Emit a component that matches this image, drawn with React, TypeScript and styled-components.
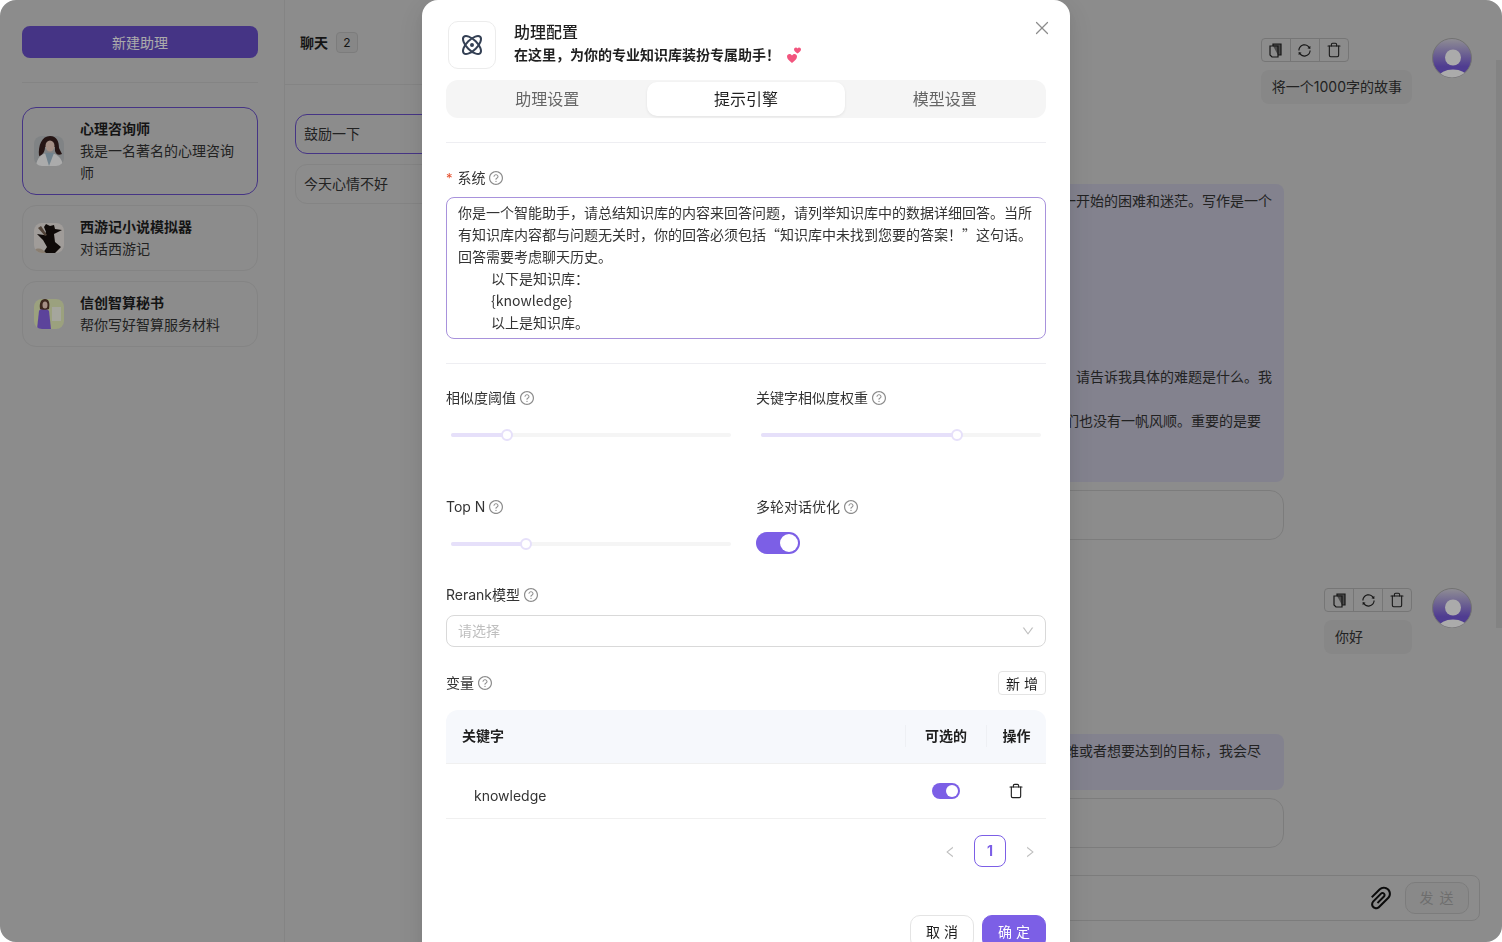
import styled, { createGlobalStyle } from 'styled-components';
import { Atom, Trash, X } from 'lucide-react';
import {
  AiOutlineDown,
  AiOutlineLeft,
  AiOutlinePaperClip,
  AiOutlineQuestionCircle,
  AiOutlineRight,
  AiOutlineSync,
} from 'react-icons/ai';

const primary = '#7c5fe6';
const primaryBehindMask = '#684ec6';
const lineBehindMask = '#c5c5c5';
const fontStack = 'Inter, "Noto Sans CJK SC", sans-serif';

const GlobalStyle = createGlobalStyle`
  html, body {
    margin: 0;
    height: 100%;
    background: #fff;
    overflow: hidden;
  }
  body {
    font-family: ${fontStack};
    font-size: 14px;
    line-height: 22px;
    color: #1f1f1f;
  }
  * {
    box-sizing: border-box;
  }
`;

const Page = styled.div`
  display: flex;
  width: 1502px;
  height: 942px;
  overflow: hidden;
  background: #d1d1d1;
`;

const Sidebar = styled.aside`
  flex: none;
  width: 285px;
  padding: 26px 26px 0 22px;
  border-right: 1px solid ${lineBehindMask};
`;

const NewButton = styled.button`
  display: block;
  width: 100%;
  height: 32px;
  padding: 2px 0 0;
  border: 0;
  border-radius: 8px;
  background: ${primaryBehindMask};
  color: #fff;
  font: inherit;
`;

const SideDivider = styled.div`
  height: 1px;
  margin: 24px 0;
  background: ${lineBehindMask};
`;

const AgentList = styled.div`
  display: flex;
  flex-direction: column;
  gap: 10px;
`;

const AgentCard = styled.div<{ $active?: boolean }>`
  display: flex;
  align-items: center;
  gap: 16px;
  padding: 10px 11px;
  border: 1px solid ${(p) => (p.$active ? primaryBehindMask : lineBehindMask)};
  border-radius: 14px;
`;

const AgentAvatar = styled.svg`
  flex: none;
  width: 30px;
  height: 30px;
  border-radius: 8px;
`;

const AgentName = styled.div`
  font-weight: 700;
`;

const AgentDesc = styled.div`
  color: #333;
`;

const ConvColumn = styled.section`
  flex: none;
  width: 300px;
`;

const ConvHeader = styled.header`
  display: flex;
  align-items: center;
  gap: 8px;
  height: 85px;
  padding: 1px 0 0 15px;
  border-bottom: 1px solid ${lineBehindMask};
`;

const ConvTitle = styled.span`
  font-weight: 600;
`;

const Badge = styled.span`
  width: 22px;
  height: 21px;
  border: 1px solid #bababa;
  border-radius: 4px;
  background: #cacaca;
  font-size: 12px;
  line-height: 19px;
  text-align: center;
`;

const ConvList = styled.div`
  display: flex;
  flex-direction: column;
  gap: 10px;
  padding: 29px 10px 0;
`;

const ConvItem = styled.div<{ $active?: boolean }>`
  height: 40px;
  padding: 8px;
  border: 1px solid ${(p) => (p.$active ? primaryBehindMask : lineBehindMask)};
  border-radius: 12px;
  color: #333;
`;

const ChatColumn = styled.main`
  flex: 1;
  min-width: 0;
  display: flex;
  flex-direction: column;
  padding-top: 38px;
`;

const UserRow = styled.div<{ $gap?: number }>`
  align-self: flex-end;
  display: flex;
  gap: 20px;
  margin: ${(p) => p.$gap ?? 0}px 24px 0 0;
`;

const UserBody = styled.div`
  display: flex;
  flex-direction: column;
  align-items: flex-start;
  gap: 8px;
`;

const Actions = styled.div`
  display: flex;
  width: 88px;
  height: 24px;
  border: 1px solid #b0b0b0;
  border-radius: 4px;
`;

const ActionCell = styled.span`
  flex: 1;
  display: flex;
  align-items: center;
  justify-content: center;
  color: #222;

  & + & {
    border-left: 1px solid #b0b0b0;
  }
`;

const UserBubble = styled.div`
  min-width: 88px;
  height: 34px;
  padding: 6px 10px 6px 11px;
  border-radius: 8px;
  background: #c9c9c9;
  color: #333;
`;

const UserAvatar = styled.svg`
  flex: none;
  width: 40px;
  height: 40px;
`;

const AnswerBubble = styled.div<{ $gap: number }>`
  align-self: flex-end;
  width: 430px;
  margin: ${(p) => p.$gap}px 212px 0 0;
  padding: 6px 0;
  border-radius: 8px;
  background: #c3c2d4;
  color: #333;
`;

const AnswerLine = styled.div<{ $short?: boolean }>`
  height: 22px;
  padding-right: ${(p) => (p.$short ? 23 : 12)}px;
  text-align: right;
  white-space: nowrap;
`;

const ReferenceBox = styled.div`
  align-self: flex-end;
  width: 430px;
  height: 50px;
  margin: 8px 212px 0 0;
  border: 1px solid #bababa;
  border-radius: 14px;
`;

const Composer = styled.div`
  align-self: flex-end;
  display: flex;
  align-items: center;
  justify-content: flex-end;
  gap: 9px;
  width: 600px;
  height: 46px;
  margin: 27px 16px 0 0;
  padding-right: 10px;
  border: 1px solid #bababa;
  border-radius: 8px;
`;

const ClipIcon = styled(AiOutlinePaperClip)`
  font-size: 30px;
  color: #111;
`;

const SendButton = styled.button`
  width: 64px;
  height: 32px;
  border: 1px solid #bababa;
  border-radius: 10px;
  background: #cdcdcd;
  color: #a5a5a5;
  font: inherit;
  letter-spacing: 1px;
`;

const ScrollThumb = styled.div`
  flex: none;
  width: 6px;
  height: 568px;
  margin-top: 60px;
  background: #c4c4c4;
`;

const Mask = styled.div`
  position: fixed;
  inset: 0;
  display: flex;
  justify-content: center;
  padding-right: 10px;
  overflow: hidden;
  background: rgba(0, 0, 0, 0.33);
`;

const PageCorner = styled.svg<{ $at: string }>`
  position: fixed;
  width: 16px;
  height: 16px;
  ${(p) => p.$at}
`;

const Modal = styled.div`
  position: relative;
  flex: none;
  align-self: flex-start;
  width: 648px;
  height: 1000px;
  padding: 21px 24px 0;
  border-radius: 16px;
  background: #fff;
  box-shadow: 0 6px 16px rgba(0, 0, 0, 0.08), 0 9px 28px 8px rgba(0, 0, 0, 0.05);
`;

const ModalHead = styled.header`
  position: relative;
  display: flex;
  gap: 18px;
  height: 48px;
  padding-left: 2px;
`;

const HeadIcon = styled.div`
  display: flex;
  align-items: center;
  justify-content: center;
  width: 48px;
  height: 48px;
  border: 1px solid #ececec;
  border-radius: 10px;
  color: #344054;
`;

const HeadTitle = styled.div`
  font-size: 16px;
  font-weight: 500;
`;

const HeadSub = styled.div`
  display: flex;
  align-items: center;
  gap: 6px;
  margin-top: 1px;
  font-weight: 600;
`;

const CloseButton = styled.span`
  position: absolute;
  top: -4px;
  right: -7px;
  color: #8c8c8c;
`;

const Tabs = styled.div`
  display: grid;
  grid-template-columns: repeat(3, 1fr);
  height: 38px;
  margin-top: 11px;
  padding: 2px;
  border-radius: 12px;
  background: #f5f5f5;
`;

const Tab = styled.div<{ $active?: boolean }>`
  border-radius: 10px;
  background: ${(p) => (p.$active ? '#fff' : 'transparent')};
  box-shadow: ${(p) => (p.$active ? '0 1px 3px rgba(0, 0, 0, 0.08)' : 'none')};
  color: ${(p) => (p.$active ? '#1f1f1f' : '#666')};
  font-size: 16px;
  line-height: 34px;
  text-align: center;
`;

const Rule = styled.div<{ $top: number }>`
  height: 1px;
  margin-top: ${(p) => p.$top}px;
  background: #eeeef2;
`;

const FieldLabel = styled.div<{ $top?: number; $bottom?: number }>`
  display: flex;
  align-items: center;
  gap: 3px;
  height: 22px;
  margin: ${(p) => p.$top ?? 0}px 0 ${(p) => p.$bottom ?? 0}px;
  color: #333;
`;

const HelpIcon = styled(AiOutlineQuestionCircle)`
  flex: none;
  font-size: 16px;
  color: #8c8c8c;
`;

const Required = styled.span`
  margin-right: 1px;
  color: #e5502e;
  font-size: 13px;
`;

const PromptArea = styled.textarea`
  display: block;
  width: 100%;
  height: 142px;
  padding: 3px 11px;
  border: 1px solid #a892dc;
  border-radius: 8px;
  outline: none;
  resize: none;
  overflow: hidden;
  color: #333;
  font: inherit;
  font-family: "Noto Sans CJK SC", sans-serif;
  word-spacing: 1px;
`;

const FieldGrid = styled.div`
  display: grid;
  grid-template-columns: 290px 290px;
  column-gap: 20px;
  row-gap: 55px;
  margin-top: 23px;
`;

const SliderRail = styled.div`
  position: relative;
  height: 4px;
  margin: 24px 5px 4px;
  border-radius: 2px;
  background: #f5f5f5;
`;

const SliderFill = styled.div`
  height: 100%;
  border-radius: 2px;
  background: #e6e0fa;
`;

const SliderHandle = styled.span`
  position: absolute;
  top: -4px;
  width: 12px;
  height: 12px;
  margin-left: -6px;
  border: 2px solid #e6e0fa;
  border-radius: 50%;
  background: #fff;
`;

const Toggle = styled.span<{ $small?: boolean }>`
  display: flex;
  justify-content: flex-end;
  width: ${(p) => (p.$small ? 28 : 44)}px;
  height: ${(p) => (p.$small ? 16 : 22)}px;
  padding: 2px;
  border-radius: 11px;
  background: ${primary};
`;

const ToggleKnob = styled.span<{ $small?: boolean }>`
  width: ${(p) => (p.$small ? 12 : 18)}px;
  height: ${(p) => (p.$small ? 12 : 18)}px;
  border-radius: 50%;
  background: #fff;
`;

const SwitchRow = styled.div`
  margin-top: 14px;
`;

const SelectBox = styled.div`
  display: flex;
  align-items: center;
  justify-content: space-between;
  height: 32px;
  padding: 0 10px 0 11px;
  border: 1px solid #d9d9d9;
  border-radius: 8px;
  color: #bfbfbf;
`;

const VarHead = styled.div`
  display: flex;
  align-items: center;
  justify-content: space-between;
  margin-top: 24px;
`;

const AddButton = styled.button`
  width: 48px;
  height: 24px;
  padding: 1px 0 0;
  border: 1px solid #e4e4e4;
  border-radius: 4px;
  background: #fff;
  color: #1f1f1f;
  font: inherit;
  line-height: 22px;
`;

const TableHead = styled.div`
  display: grid;
  grid-template-columns: 1fr 81px 60px;
  align-items: center;
  height: 54px;
  margin-top: 15px;
  padding-bottom: 2px;
  border-bottom: 1px solid #f0f0f0;
  border-radius: 12px 12px 0 0;
  background: #f6f8fc;
  font-weight: 600;
`;

const HeadCell = styled.div`
  padding-left: 16px;
`;

const HeadCellCentered = styled.div`
  border-left: 1px solid #eef0f4;
  text-align: center;
`;

const TableRow = styled.div`
  display: grid;
  grid-template-columns: 1fr 81px 60px;
  align-items: center;
  height: 55px;
  border-bottom: 1px solid #f0f0f0;
`;

const KeyCell = styled.div`
  padding: 10px 0 0 28px;
  color: #333;
`;

const CenterCell = styled.div`
  display: flex;
  justify-content: center;
`;

const Pagination = styled.div`
  display: flex;
  align-items: center;
  justify-content: flex-end;
  gap: 17px;
  margin-top: 16px;
  padding-right: 9px;
  color: #bfbfbf;
  font-size: 14px;

  & > svg {
    margin-top: 2px;
  }
`;

const PageNumber = styled.span`
  width: 32px;
  height: 32px;
  border: 1px solid ${primary};
  border-radius: 8px;
  color: ${primary};
  font-size: 14px;
  font-weight: 700;
  line-height: 30px;
  text-align: center;
`;

const Footer = styled.footer`
  display: flex;
  justify-content: flex-end;
  gap: 8px;
  margin-top: 48px;
`;

const FooterButton = styled.button<{ $primary?: boolean }>`
  width: 64px;
  height: 34px;
  padding: 0;
  border: 1px solid ${(p) => (p.$primary ? primary : '#e4e4e4')};
  border-radius: 10px;
  background: ${(p) => (p.$primary ? primary : '#fff')};
  color: ${(p) => (p.$primary ? '#fff' : '#1f1f1f')};
  font: inherit;
`;

const promptText = `你是一个智能助手，请总结知识库的内容来回答问题，请列举知识库中的数据详细回答。当所有知识库内容都与问题无关时，你的回答必须包括“知识库中未找到您要的答案！”这句话。回答需要考虑聊天历史。
        以下是知识库：
        {knowledge}
        以上是知识库。`;

function CopyIcon() {
  return (
    <svg width="13" height="15" viewBox="0 0 13 15" fill="none" stroke="currentColor" strokeWidth="1.2">
      <path d="M4 3V1h8v11H9" fill="currentColor" fillOpacity="0.55" />
      <path d="M1 3h8v11H3l-2-2z" />
    </svg>
  );
}

function HeartsIcon() {
  return (
    <svg width="16" height="16" viewBox="0 0 16 16" fill="#f2557e">
      <path d="M6 16C3 13.600 1 12 1 9.600 1 8 2.200 7 3.500 7 4.500 7 5.500 7.600 6 8.500 6.500 7.600 7.500 7 8.500 7 9.800 7 11 8 11 9.600 11 12 9 13.600 6 16z" />
      <path d="M11.500 6.500C9.500 5 8 4 8 2.500 8 1.400 8.900.5 9.900.5c.7 0 1.300.4 1.600 1 .3-.6.900-1 1.600-1 1 0 1.900.9 1.900 2 0 1.500-1.500 2.500-3.500 4z" />
    </svg>
  );
}

function AvatarCounselor() {
  return (
    <AgentAvatar viewBox="0 0 30 30">
      <rect width="30" height="30" fill="#bfc3c6" />
      <path d="M2 30c1-9 6-13 13-13s13 4 14 13z" fill="#fff" />
      <path d="M11 17l4 13 5-13z" fill="#a9c2d2" />
      <path d="M5 20C4 9 8 0 16 0c7 0 9 6 9 12l3 6c-4 2-6 0-7-3v-4H11c0 4-2 8-6 9z" fill="#3a201f" />
      <ellipse cx="16" cy="10" rx="4.500" ry="5.500" fill="#f6d6c6" />
    </AgentAvatar>
  );
}

function AvatarInk() {
  return (
    <AgentAvatar viewBox="0 0 30 30">
      <rect width="30" height="30" fill="#efe9e4" />
      <path d="M12 1l4 2 4-1 1 4 7 1-8 4 1 8 6 5-6 6H9l4-6-4-7-6-6 7 1 2-3-2-5z" fill="#17100c" />
      <path d="M4 5l7 8 2-1-6-9z" fill="#7a6554" />
      <path d="M0 27c5-3 9-1 12 3H0z" fill="#cdbda9" />
    </AgentAvatar>
  );
}

function AvatarSecretary() {
  return (
    <AgentAvatar viewBox="0 0 30 30">
      <rect width="30" height="30" fill="#e8f0bc" />
      <rect x="18" y="8" width="9" height="14" fill="#f6f8ea" />
      <path d="M3 30l2-18c1-3 8-3 10 0l2 18z" fill="#8a65e8" />
      <path d="M6 10C5 4 7 0 11 0s5 4 4 10c-2 1-7 1-9 0z" fill="#5a3b2c" />
      <ellipse cx="11" cy="6" rx="2.500" ry="3.500" fill="#f6d6c6" />
    </AgentAvatar>
  );
}

function PersonAvatar() {
  return (
    <UserAvatar viewBox="0 0 40 40">
      <defs>
        <linearGradient id="person-bg" x1="0" y1="0" x2="0" y2="1">
          <stop offset="0" stopColor="#d6d4dc" />
          <stop offset="0.72" stopColor="#775ad8" />
        </linearGradient>
        <clipPath id="person-clip">
          <circle cx="20" cy="20" r="19.500" />
        </clipPath>
      </defs>
      <circle cx="20" cy="20" r="19.500" fill="url(#person-bg)" stroke="#aaa" />
      <circle cx="21" cy="19.500" r="8" fill="#fff" />
      <ellipse cx="21" cy="39" rx="14" ry="7.500" fill="#fff" clipPath="url(#person-clip)" />
    </UserAvatar>
  );
}

function MessageActions() {
  return (
    <Actions>
      <ActionCell>
        <CopyIcon />
      </ActionCell>
      <ActionCell>
        <AiOutlineSync size={15} />
      </ActionCell>
      <ActionCell>
        <Trash size={16} strokeWidth={1.6} />
      </ActionCell>
    </Actions>
  );
}

function ValueSlider({ percent }: { percent: number }) {
  return (
    <SliderRail>
      <SliderFill style={{ width: `${percent}%` }} />
      <SliderHandle style={{ left: `${percent}%` }} />
    </SliderRail>
  );
}

const corners = [
  { at: 'top: 0; left: 0;', d: 'M0 0h16A16 16 0 0 0 0 16z' },
  { at: 'top: 0; right: 0;', d: 'M16 0H0a16 16 0 0 1 16 16z' },
  { at: 'bottom: 0; left: 0;', d: 'M0 16V0a16 16 0 0 0 16 16z' },
  { at: 'bottom: 0; right: 0;', d: 'M16 16H0A16 16 0 0 0 16 0z' },
];

export default function App() {
  return (
    <>
      <GlobalStyle />
      <Page>
        <Sidebar>
          <NewButton>新建助理</NewButton>
          <SideDivider />
          <AgentList>
            <AgentCard $active>
              <AvatarCounselor />
              <div>
                <AgentName>心理咨询师</AgentName>
                <AgentDesc>我是一名著名的心理咨询师</AgentDesc>
              </div>
            </AgentCard>
            <AgentCard>
              <AvatarInk />
              <div>
                <AgentName>西游记小说模拟器</AgentName>
                <AgentDesc>对话西游记</AgentDesc>
              </div>
            </AgentCard>
            <AgentCard>
              <AvatarSecretary />
              <div>
                <AgentName>信创智算秘书</AgentName>
                <AgentDesc>帮你写好智算服务材料</AgentDesc>
              </div>
            </AgentCard>
          </AgentList>
        </Sidebar>

        <ConvColumn>
          <ConvHeader>
            <ConvTitle>聊天</ConvTitle>
            <Badge>2</Badge>
          </ConvHeader>
          <ConvList>
            <ConvItem $active>鼓励一下</ConvItem>
            <ConvItem>今天心情不好</ConvItem>
          </ConvList>
        </ConvColumn>

        <ChatColumn>
          <UserRow>
            <UserBody>
              <MessageActions />
              <UserBubble>将一个1000字的故事</UserBubble>
            </UserBody>
            <PersonAvatar />
          </UserRow>
          <AnswerBubble $gap={80}>
            <AnswerLine>一开始的困难和迷茫。写作是一个</AnswerLine>
            <AnswerLine />
            <AnswerLine />
            <AnswerLine />
            <AnswerLine />
            <AnswerLine />
            <AnswerLine />
            <AnswerLine />
            <AnswerLine>请告诉我具体的难题是什么。我</AnswerLine>
            <AnswerLine />
            <AnswerLine $short>们也没有一帆风顺。重要的是要</AnswerLine>
            <AnswerLine />
            <AnswerLine />
          </AnswerBubble>
          <ReferenceBox />
          <UserRow $gap={48}>
            <UserBody>
              <MessageActions />
              <UserBubble>你好</UserBubble>
            </UserBody>
            <PersonAvatar />
          </UserRow>
          <AnswerBubble $gap={80}>
            <AnswerLine $short>难或者想要达到的目标，我会尽</AnswerLine>
            <AnswerLine />
          </AnswerBubble>
          <ReferenceBox />
          <Composer>
            <ClipIcon />
            <SendButton>发 送</SendButton>
          </Composer>
        </ChatColumn>
        <ScrollThumb />
      </Page>

      <Mask>
        <Modal>
          <ModalHead>
            <HeadIcon>
              <Atom size={24} />
            </HeadIcon>
            <div>
              <HeadTitle>助理配置</HeadTitle>
              <HeadSub>
                在这里，为你的专业知识库装扮专属助手！
                <HeartsIcon />
              </HeadSub>
            </div>
            <CloseButton>
              <X size={22} strokeWidth={1.3} />
            </CloseButton>
          </ModalHead>

          <Tabs>
            <Tab>助理设置</Tab>
            <Tab $active>提示引擎</Tab>
            <Tab>模型设置</Tab>
          </Tabs>
          <Rule $top={24} />

          <FieldLabel $top={24} $bottom={8}>
            <span>
              <Required>*</Required> 系统
            </span>
            <HelpIcon />
          </FieldLabel>
          <PromptArea readOnly value={promptText} />
          <Rule $top={24} />

          <FieldGrid>
            <div>
              <FieldLabel>
                相似度阈值 <HelpIcon />
              </FieldLabel>
              <ValueSlider percent={20} />
            </div>
            <div>
              <FieldLabel>
                关键字相似度权重 <HelpIcon />
              </FieldLabel>
              <ValueSlider percent={70} />
            </div>
            <div>
              <FieldLabel>
                Top N <HelpIcon />
              </FieldLabel>
              <ValueSlider percent={26.7} />
            </div>
            <div>
              <FieldLabel>
                多轮对话优化 <HelpIcon />
              </FieldLabel>
              <SwitchRow>
                <Toggle>
                  <ToggleKnob />
                </Toggle>
              </SwitchRow>
            </div>
          </FieldGrid>

          <FieldLabel $top={30} $bottom={9}>
            Rerank模型 <HelpIcon />
          </FieldLabel>
          <SelectBox>
            请选择
            <AiOutlineDown size={14} />
          </SelectBox>

          <VarHead>
            <FieldLabel>
              变量 <HelpIcon />
            </FieldLabel>
            <AddButton>新 增</AddButton>
          </VarHead>

          <TableHead>
            <HeadCell>关键字</HeadCell>
            <HeadCellCentered>可选的</HeadCellCentered>
            <HeadCellCentered>操作</HeadCellCentered>
          </TableHead>
          <TableRow>
            <KeyCell>knowledge</KeyCell>
            <CenterCell>
              <Toggle $small>
                <ToggleKnob $small />
              </Toggle>
            </CenterCell>
            <CenterCell>
              <Trash size={16} strokeWidth={1.7} />
            </CenterCell>
          </TableRow>

          <Pagination>
            <AiOutlineLeft />
            <PageNumber>1</PageNumber>
            <AiOutlineRight />
          </Pagination>

          <Footer>
            <FooterButton>取 消</FooterButton>
            <FooterButton $primary>确 定</FooterButton>
          </Footer>
        </Modal>
        {corners.map((c) => (
          <PageCorner key={c.at} $at={c.at} viewBox="0 0 16 16">
            <path d={c.d} fill="#fff" />
          </PageCorner>
        ))}
      </Mask>
    </>
  );
}
